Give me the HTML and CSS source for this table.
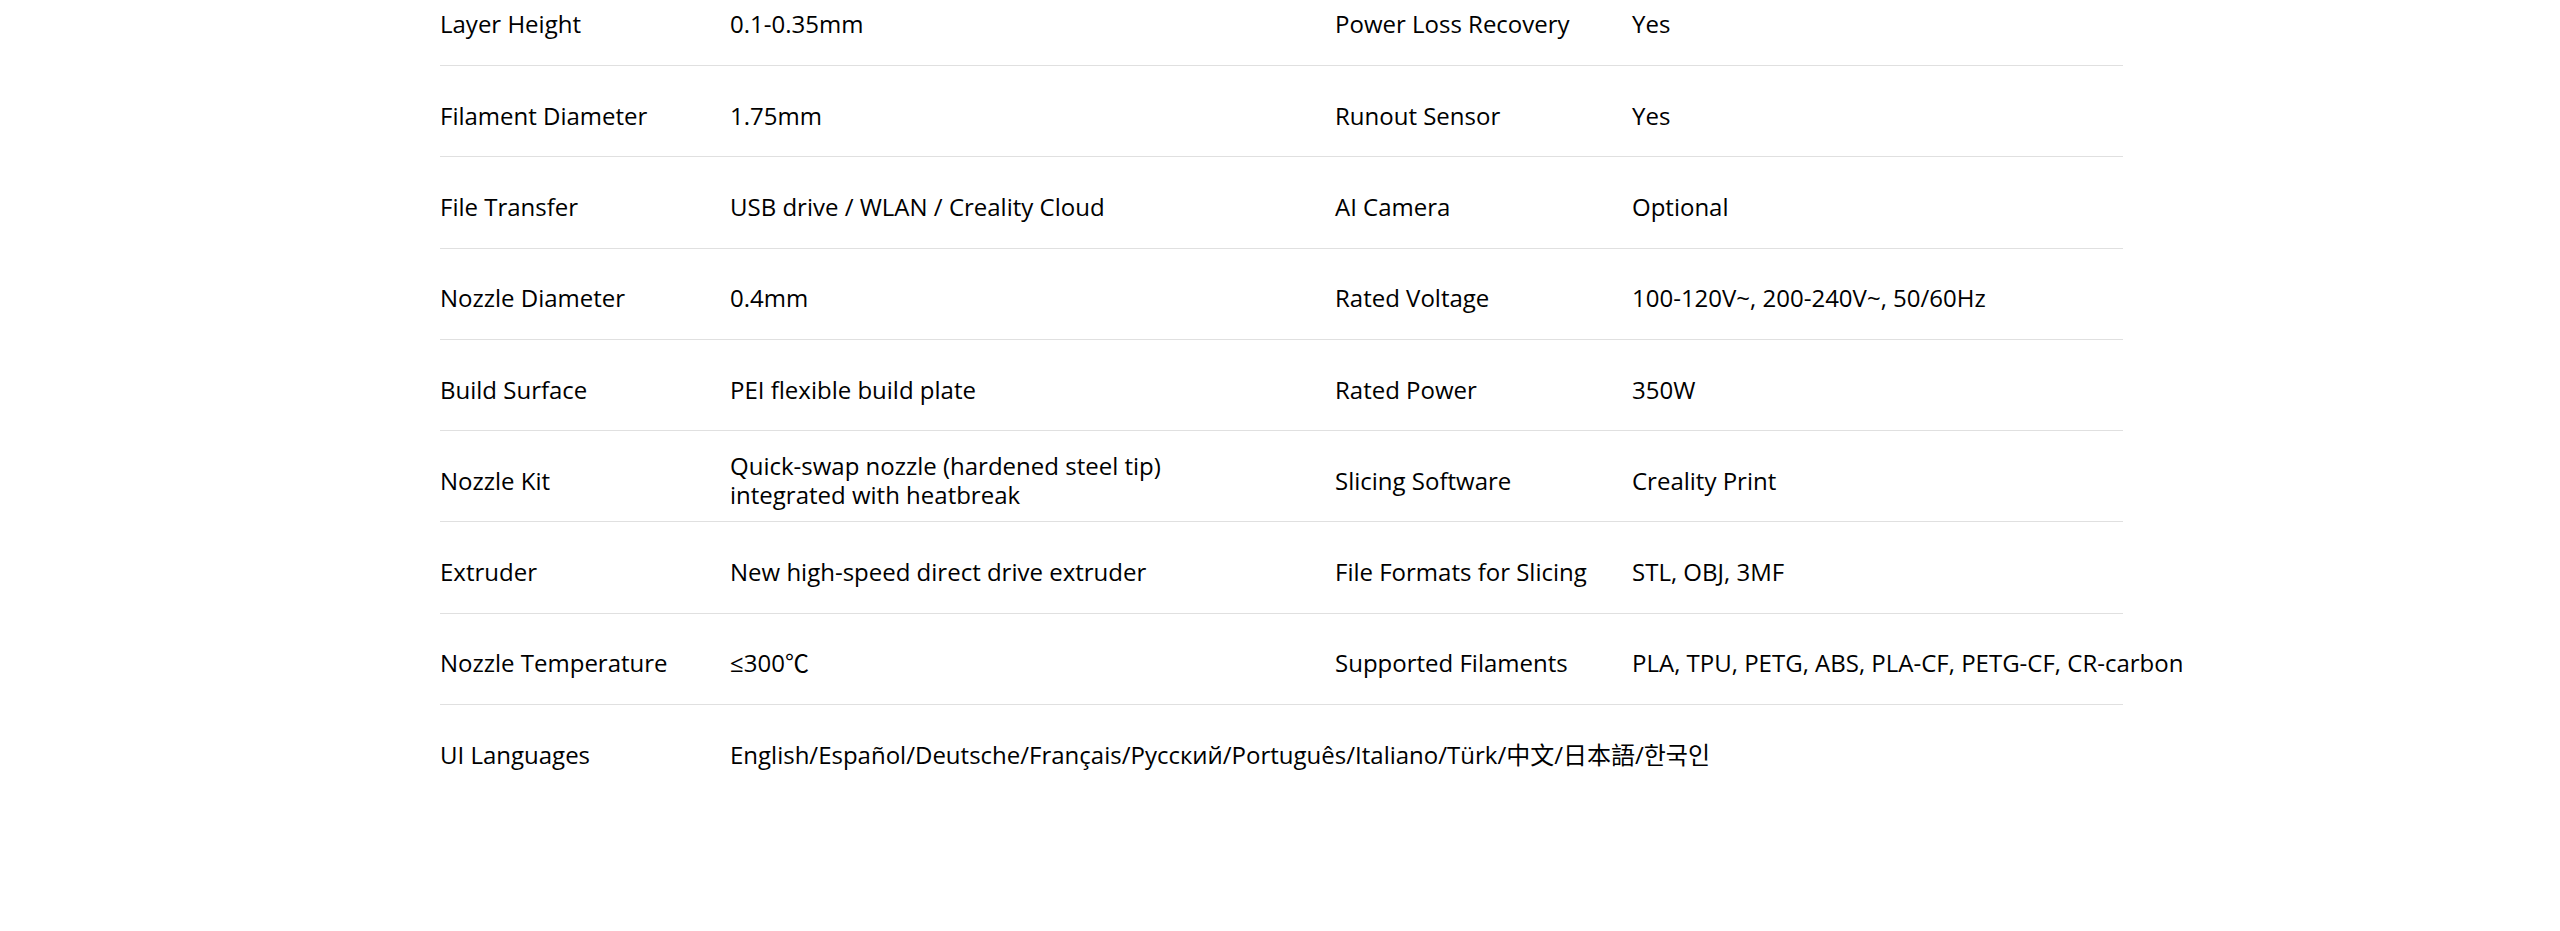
FILE: index.html
```html
<!DOCTYPE html>
<html lang="en">
<head>
<meta charset="utf-8">
<title>Specifications</title>
<link rel="stylesheet" href="styles.css">
</head>
<body>
<main class="page">
  <section class="specs">
    <div class="row">
      <div class="label">Layer Height</div>
      <div class="value">0.1-0.35mm</div>
      <div class="label">Power Loss Recovery</div>
      <div class="value">Yes</div>
    </div>
    <div class="row">
      <div class="label">Filament Diameter</div>
      <div class="value">1.75mm</div>
      <div class="label">Runout Sensor</div>
      <div class="value">Yes</div>
    </div>
    <div class="row">
      <div class="label">File Transfer</div>
      <div class="value">USB drive / WLAN / Creality Cloud</div>
      <div class="label">AI Camera</div>
      <div class="value">Optional</div>
    </div>
    <div class="row">
      <div class="label">Nozzle Diameter</div>
      <div class="value">0.4mm</div>
      <div class="label">Rated Voltage</div>
      <div class="value">100-120V~, 200-240V~, 50/60Hz</div>
    </div>
    <div class="row">
      <div class="label">Build Surface</div>
      <div class="value">PEI flexible build plate</div>
      <div class="label">Rated Power</div>
      <div class="value">350W</div>
    </div>
    <div class="row">
      <div class="label">Nozzle Kit</div>
      <div class="value">Quick-swap nozzle (hardened steel tip)<br>integrated with heatbreak</div>
      <div class="label">Slicing Software</div>
      <div class="value">Creality Print</div>
    </div>
    <div class="row">
      <div class="label">Extruder</div>
      <div class="value">New high-speed direct drive extruder</div>
      <div class="label">File Formats for Slicing</div>
      <div class="value">STL, OBJ, 3MF</div>
    </div>
    <div class="row">
      <div class="label">Nozzle Temperature</div>
      <div class="value">≤300℃</div>
      <div class="label">Supported Filaments</div>
      <div class="value">PLA, TPU, PETG, ABS, PLA-CF, PETG-CF, CR-carbon</div>
    </div>
    <div class="row row-last">
      <div class="label">UI Languages</div>
      <div class="value value-wide">English/Español/Deutsche/Français/Русский/Português/Italiano/Türk/中文/日本語/한국인</div>
    </div>
  </section>
</main>
</body>
</html>
```

FILE: styles.css
```css
html, body {
  margin: 0;
  padding: 0;
  background: #ffffff;
}

body {
  font-family: "Open Sans", "Noto Sans CJK SC", "Noto Sans CJK JP", "Noto Sans CJK KR", sans-serif;
  font-size: 24px;
  line-height: 29px;
  color: #000000;
}

.page {
  height: 931px;
  overflow: hidden;
}

.specs {
  width: 1683px;
  margin: -25.3px 0 0 440px;
}

.row {
  display: grid;
  grid-template-columns: 290px 605px 297px 491px;
  align-items: center;
  box-sizing: border-box;
  height: 91.3px;
  padding-top: 8px;
  border-bottom: 1px solid #e0e0e0;
}

.row-last {
  border-bottom: none;
}

.label {
  color: #000000;
  font-weight: 500;
  white-space: nowrap;
}

.value {
  color: #000000;
  white-space: nowrap;
}

.value-wide {
  grid-column: 2 / 5;
}
```
